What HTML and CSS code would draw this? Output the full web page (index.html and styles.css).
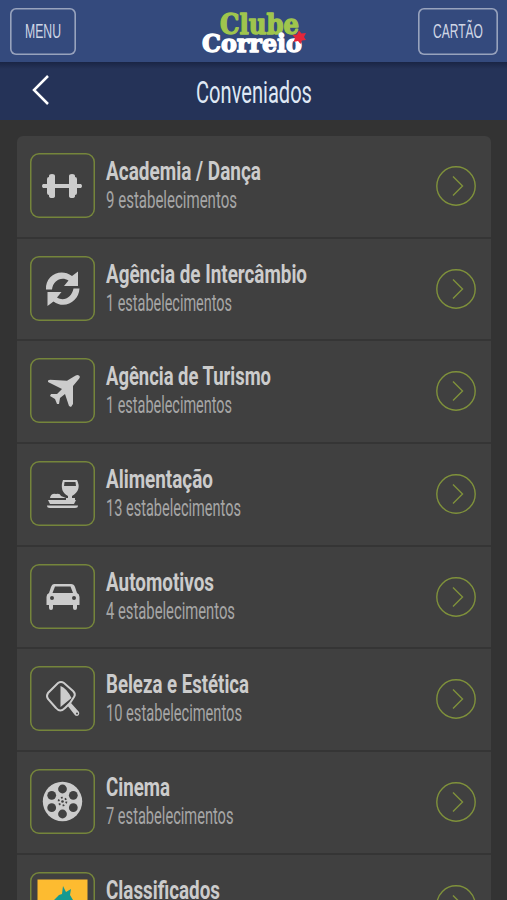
FILE: index.html
```html
<!DOCTYPE html>
<html lang="pt-BR">
<head>
    <meta charset="utf-8">
    <title>Clube Correio</title>
    <link rel="stylesheet" href="styles.css">
</head>
<body>
    <header class="topbar">
        <button class="btn">
            <svg class="text" width="36" height="20"><text x="0" y="18" textLength="36" lengthAdjust="spacingAndGlyphs">MENU</text></svg>
        </button>
        <svg class="logo" width="106" height="48" viewBox="0 0 106 48">
            <text class="logo-clube" x="19" y="26" textLength="79" lengthAdjust="spacingAndGlyphs">Clube</text>
            <text class="logo-correio" x="1" y="43.5" textLength="100" lengthAdjust="spacingAndGlyphs">Correio</text>
            <path class="logo-star" d="M98 22.500l2.500 3 4.500-.5-2 4 2 3-4 .5-1.500 3.500-2.500-3-4.500 1 1.500-4-2.500-3 4.500-.5z"/>
        </svg>
        <button class="btn btn-card">
            <svg class="text" width="50" height="20"><text x="0" y="18" textLength="50" lengthAdjust="spacingAndGlyphs">CARTÃO</text></svg>
        </button>
    </header>
    <div class="titlebar">
        <svg class="back" width="18" height="32" viewBox="0 0 18 32"><path d="M16 2L2 16l14 14"/></svg>
        <svg class="heading" width="116" height="36"><text x="0" y="28.500" textLength="116" lengthAdjust="spacingAndGlyphs">Conveniados</text></svg>
    </div>

    <main class="list">
        <div class="item">
            <div class="icon">
                <svg width="65" height="65" viewBox="0 0 65 65"><path d="M13 31h4v-5q0-2 2-2v-1q0-2 3-2t3 2v8h14v-8q0-2 3-2t3 2v1q2 0 2 2v5h4q2 2 0 4h-4v5q0 2-2 2v1q0 2-3 2t-3-2v-8H25v8q0 2-3 2t-3-2v-1q-2 0-2-2v-5h-4q-2-2 0-4z"/></svg>
            </div>
            <svg class="label" width="210" height="65">
                <text class="name" x="0" y="26.5" textLength="155" lengthAdjust="spacingAndGlyphs">Academia / Dança</text>
                <text class="count" x="0" y="55" textLength="131" lengthAdjust="spacingAndGlyphs">9 estabelecimentos</text>
            </svg>
            <svg class="arrow" width="40" height="40" viewBox="0 0 40 40"><circle cx="20" cy="20" r="19.2"/><path d="M17 10.5l9.5 9.5-9.5 9.5"/></svg>
        </div>
        <div class="item">
            <div class="icon">
                <svg width="65" height="65" viewBox="0 0 65 65"><path d="M16 33.500C15 20 30 11.500 42 20l6-4.500V30H34l4.500-5.500C31 20 23 25 22 33.500zM49.500 32.500C49 45 35 54 23.500 45.500L17.500 50V36h14l-4.500 5.500C34 46 42 41 43.500 32.500z"/></svg>
            </div>
            <svg class="label" width="210" height="65">
                <text class="name" x="0" y="26.5" textLength="201" lengthAdjust="spacingAndGlyphs">Agência de Intercâmbio</text>
                <text class="count" x="0" y="55" textLength="126" lengthAdjust="spacingAndGlyphs">1 estabelecimentos</text>
            </svg>
            <svg class="arrow" width="40" height="40" viewBox="0 0 40 40"><circle cx="20" cy="20" r="19.2"/><path d="M17 10.5l9.5 9.5-9.5 9.5"/></svg>
        </div>
        <div class="item">
            <div class="icon">
                <svg width="65" height="65" viewBox="0 0 65 65"><path d="M44 18.500q3-2.500 5-1t-1 4.500l-5 6v18l-2 3-2-1-4-12-5 4-1 6h-2l-2-5-5-3 1-2h6l5-5-14-7v-1.500l2-.8 17 1z"/></svg>
            </div>
            <svg class="label" width="210" height="65">
                <text class="name" x="0" y="26.5" textLength="165" lengthAdjust="spacingAndGlyphs">Agência de Turismo</text>
                <text class="count" x="0" y="55" textLength="126" lengthAdjust="spacingAndGlyphs">1 estabelecimentos</text>
            </svg>
            <svg class="arrow" width="40" height="40" viewBox="0 0 40 40"><circle cx="20" cy="20" r="19.2"/><path d="M17 10.5l9.5 9.5-9.5 9.5"/></svg>
        </div>
        <div class="item">
            <div class="icon">
                <svg width="65" height="65" viewBox="0 0 65 65"><path fill-rule="evenodd" d="M33 19h14q5 10-5 16v2h3v2h-9v-2h2v-2q-9-5-5-16zM34.500 21l-.5 4h12l-.5-4z"/><path d="M20 37q1-5 6-4 4-1 5 2l5 2zM18 39h28l-2 4H20zM17 44.500h31q0 2.500-3 2.500H20q-3 0-3-2.500z"/></svg>
            </div>
            <svg class="label" width="210" height="65">
                <text class="name" x="0" y="26.5" textLength="107" lengthAdjust="spacingAndGlyphs">Alimentação</text>
                <text class="count" x="0" y="55" textLength="135" lengthAdjust="spacingAndGlyphs">13 estabelecimentos</text>
            </svg>
            <svg class="arrow" width="40" height="40" viewBox="0 0 40 40"><circle cx="20" cy="20" r="19.2"/><path d="M17 10.5l9.5 9.5-9.5 9.5"/></svg>
        </div>
        <div class="item">
            <div class="icon">
                <svg width="65" height="65" viewBox="0 0 65 65"><path fill-rule="evenodd" d="M24 20h17q3 0 4 3l2 6q2.500 1 2.500 4v8H47v3q0 2-2 2t-2-2v-3H23v3q0 2-2 2t-2-2v-3h-2.500v-8q0-3 2.500-4l2-6q1-3 3-3zM25 22.500l-2.500 6.500h20.500l-2.500-6.500zM22 32a2 2 0 1 0 0 4 2 2 0 0 0 0-4zM44 32a2 2 0 1 0 0 4 2 2 0 0 0 0-4z"/></svg>
            </div>
            <svg class="label" width="210" height="65">
                <text class="name" x="0" y="26.5" textLength="108" lengthAdjust="spacingAndGlyphs">Automotivos</text>
                <text class="count" x="0" y="55" textLength="129" lengthAdjust="spacingAndGlyphs">4 estabelecimentos</text>
            </svg>
            <svg class="arrow" width="40" height="40" viewBox="0 0 40 40"><circle cx="20" cy="20" r="19.2"/><path d="M17 10.5l9.5 9.5-9.5 9.5"/></svg>
        </div>
        <div class="item">
            <div class="icon">
                <svg width="65" height="65" viewBox="0 0 65 65"><path class="line" d="M28 17q3-2 6 0l9 8q3 3 1 6l-4 6-5 5q-5 5-9 0l-8-9q-2-3 0-6z"/><path d="M30.500 20q6 2 11 12l-11 9zM37 39l4-2 8 9q1 3-2 4-2 0-3-2z"/><circle class="hole" cx="47" cy="47.500" r="1"/></svg>
            </div>
            <svg class="label" width="210" height="65">
                <text class="name" x="0" y="26.5" textLength="143" lengthAdjust="spacingAndGlyphs">Beleza e Estética</text>
                <text class="count" x="0" y="55" textLength="136" lengthAdjust="spacingAndGlyphs">10 estabelecimentos</text>
            </svg>
            <svg class="arrow" width="40" height="40" viewBox="0 0 40 40"><circle cx="20" cy="20" r="19.2"/><path d="M17 10.5l9.5 9.5-9.5 9.5"/></svg>
        </div>
        <div class="item">
            <div class="icon">
                <svg width="65" height="65" viewBox="0 0 65 65">
                    <circle cx="32.5" cy="32.5" r="19.7"/>
                    <g class="hole"><circle cx="32.5" cy="20" r="4.4"/><circle cx="43.3" cy="26.3" r="4.4"/><circle cx="43.3" cy="38.7" r="4.4"/><circle cx="32.5" cy="45" r="4.4"/><circle cx="21.7" cy="38.7" r="4.4"/><circle cx="21.7" cy="26.3" r="4.4"/><circle cx="32.5" cy="32.5" r="1.3"/></g>
                    <circle class="dots" cx="32.5" cy="32.5" r="3.9"/>
                </svg>
            </div>
            <svg class="label" width="210" height="65">
                <text class="name" x="0" y="26.5" textLength="64" lengthAdjust="spacingAndGlyphs">Cinema</text>
                <text class="count" x="0" y="55" textLength="127.5" lengthAdjust="spacingAndGlyphs">7 estabelecimentos</text>
            </svg>
            <svg class="arrow" width="40" height="40" viewBox="0 0 40 40"><circle cx="20" cy="20" r="19.2"/><path d="M17 10.5l9.5 9.5-9.5 9.5"/></svg>
        </div>
        <div class="item">
            <div class="icon">
                <svg width="65" height="65" viewBox="0 0 65 65"><path class="yellow" d="M7.500 7.500h50v50h-50z"/><path class="teal" d="M33 14l3 6 5-3-1 6 3 5v20H28V29l-4-1 5-5 3-1z"/></svg>
            </div>
            <svg class="label" width="210" height="65">
                <text class="name" x="0" y="26.5" textLength="114" lengthAdjust="spacingAndGlyphs">Classificados</text>
            </svg>
            <svg class="arrow" width="40" height="40" viewBox="0 0 40 40"><circle cx="20" cy="20" r="19.2"/><path d="M17 10.5l9.5 9.5-9.5 9.5"/></svg>
        </div>
    </main>
</body>
</html>
```

FILE: styles.css
```css
* {
    box-sizing: border-box;
}
body {
    margin: 0;
    height: 900px;
    overflow: hidden;
    background-color: #333;
    font-family: Roboto, "Liberation Sans", sans-serif;
}
svg {
    display: block;
    flex: none;
    overflow: visible;
}
.topbar {
    display: flex;
    justify-content: space-between;
    align-items: flex-start;
    height: 62px;
    padding: 8px 9px 0 10px;
    background-color: #344a7d;
}
.btn {
    display: flex;
    justify-content: center;
    width: 66px;
    height: 47px;
    padding: 12px 0 0;
    border: none;
    border-radius: 6px;
    box-shadow: inset 0 0 0 1.6px #98a3bd;
    background: none;
}
.btn-card {
    width: 80px;
}
.text {
    fill: #cfd6e5;
    font-size: 20px;
}
.logo {
    margin-left: 14px;
    font-family: "DejaVu Serif", serif;
    font-weight: bold;
    font-size: 27px;
    stroke-width: 1.4;
    stroke-linejoin: round;
}
.logo-clube {
    fill: #9fc54d;
    stroke: #9fc54d;
}
.logo-correio {
    fill: #fff;
    stroke: #fff;
    font-size: 25px;
}
.logo-star {
    fill: #e3263a;
}
.titlebar {
    display: flex;
    align-items: flex-start;
    height: 58px;
    padding: 12px 32px 0;
    background: linear-gradient(#1a2545, #253358 7px);
}
.back {
    fill: none;
    stroke: #fff;
    stroke-width: 2.5;
}
.heading {
    margin-left: 146px;
    fill: #dfe8f5;
    font-size: 31px;
    font-weight: 400;
}
.list {
    margin: 16px 16px 0 17px;
    border-radius: 6px 6px 0 0;
    background-color: #404040;
}
.item {
    display: flex;
    align-items: flex-start;
    height: 102.7px;
    padding: 17px 15px 0 13px;
    border-bottom: 2px solid #353535;
}
.icon {
    flex: none;
    width: 65px;
    height: 65px;
    border-radius: 9px;
    box-shadow: inset 0 0 0 1.5px #75853b;
    fill: #ccc;
}
.line {
    fill: none;
    stroke: #ccc;
    stroke-width: 2;
}
.hole {
    fill: #404040;
}
.dots {
    fill: none;
    stroke: #404040;
    stroke-width: 1.8;
    stroke-dasharray: 1.8 2.284;
}
.yellow {
    fill: #fdbb30;
}
.teal {
    fill: #159a91;
}
.label {
    margin-left: 11px;
}
.name {
    fill: #ccc;
    font-size: 26px;
    font-weight: 700;
}
.count {
    fill: #a6a6a6;
    font-size: 24px;
    font-weight: 400;
}
.arrow {
    margin: 13px 0 0 auto;
    fill: none;
    stroke: #7f913b;
    stroke-width: 1.4;
}
```
